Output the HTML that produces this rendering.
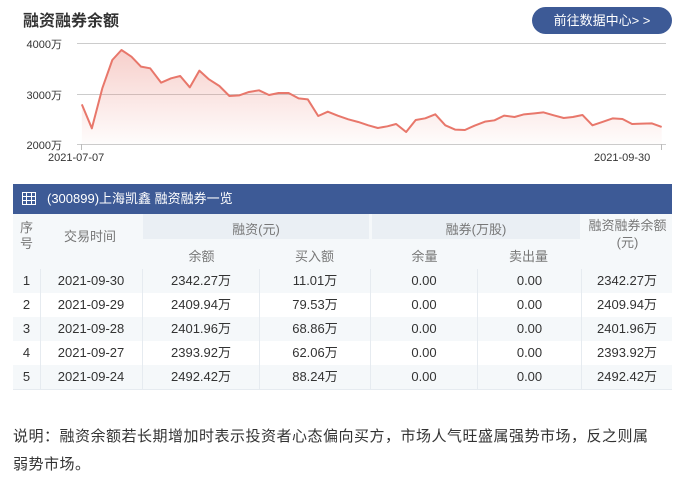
<!DOCTYPE html>
<html><head><meta charset="utf-8"><style>
*{margin:0;padding:0;box-sizing:border-box}
body{width:679px;height:477px;background:#fff;font-family:"Liberation Sans","Noto Sans CJK SC",sans-serif;color:#333;position:relative;overflow:hidden}
.abs{position:absolute}
.title{left:23px;top:7px;font-size:16px;font-weight:bold;color:#333}
.btn{left:532px;top:7px;width:140px;height:27px;border-radius:14px;background:#3d5a96;color:#fff;font-size:13px;line-height:27px;text-align:center}
.yl{font-size:11px;color:#333;width:50px;text-align:right;left:12px}
.bar{left:13px;top:184px;width:659px;height:30px;background:#3d5a96;color:#fff;font-size:13px;line-height:30px;padding-left:34px}
.c{position:absolute;text-align:center;font-size:13px}
.h{color:#777;font-size:13px}
.note{left:13px;top:423px;width:664px;font-size:15px;letter-spacing:0.5px;line-height:28px;color:#333}
</style></head><body>
<div class="abs title">融资融券余额</div>
<div class="abs btn">前往数据中心&gt; &gt;</div>
<div class="abs yl" style="top:36px">4000万</div>
<div class="abs yl" style="top:87px">3000万</div>
<div class="abs yl" style="top:137px">2000万</div>
<div class="abs" style="left:48px;top:152px;font-size:11px">2021-07-07</div>
<div class="abs" style="left:594px;top:152px;font-size:11px">2021-09-30</div>
<svg class="abs" style="left:0;top:0" width="679" height="170">
<defs><linearGradient id="g" x1="0" y1="0" x2="0" y2="1"><stop offset="0" stop-color="#e8776b" stop-opacity="0.35"/><stop offset="1" stop-color="#e8776b" stop-opacity="0.02"/></linearGradient></defs>
<line x1="77" y1="43.5" x2="666" y2="43.5" stroke="#ccc"/>
<line x1="77" y1="94.5" x2="666" y2="94.5" stroke="#ccc"/>
<line x1="77" y1="144.5" x2="666" y2="144.5" stroke="#ccc"/>
<line x1="81.5" y1="144" x2="81.5" y2="150" stroke="#bbb"/>
<line x1="661.5" y1="144" x2="661.5" y2="150" stroke="#bbb"/>
<g transform="scale(0.4353,0.3333)">
<path fill="url(#g)" d="M188,433 L188,313 L211,385 L235,265 L258,180 L279,150 L302,170 L324,200 L345,205 L370,248 L393,235 L414,228 L436,262 L458,212 L480,238 L504,258 L527,288 L550,286 L572,276 L595,271 L618,285 L640,279 L663,279 L686,295 L707,298 L731,348 L753,335 L776,347 L800,358 L823,366 L846,376 L868,384 L890,379 L910,372 L933,396 L955,360 L977,355 L1000,343 L1023,376 L1046,389 L1068,390 L1090,377 L1114,365 L1136,361 L1158,347 L1182,351 L1204,343 L1228,340 L1248,337 L1272,346 L1295,354 L1316,351 L1338,345 L1361,376 L1384,366 L1408,355 L1430,357 L1452,372 L1476,371 L1497,370 L1520,381 L1520,433 Z"/>
<path fill="none" stroke="#e8776b" stroke-width="2" vector-effect="non-scaling-stroke" stroke-linejoin="round" d="M188,313 L211,385 L235,265 L258,180 L279,150 L302,170 L324,200 L345,205 L370,248 L393,235 L414,228 L436,262 L458,212 L480,238 L504,258 L527,288 L550,286 L572,276 L595,271 L618,285 L640,279 L663,279 L686,295 L707,298 L731,348 L753,335 L776,347 L800,358 L823,366 L846,376 L868,384 L890,379 L910,372 L933,396 L955,360 L977,355 L1000,343 L1023,376 L1046,389 L1068,390 L1090,377 L1114,365 L1136,361 L1158,347 L1182,351 L1204,343 L1228,340 L1248,337 L1272,346 L1295,354 L1316,351 L1338,345 L1361,376 L1384,366 L1408,355 L1430,357 L1452,372 L1476,371 L1497,370 L1520,381"/>
</g>
</svg>
<div class="abs bar">(300899)上海凯鑫 融资融券一览</div>
<svg class="abs" style="left:22px;top:192px" width="14" height="13"><rect x="0.5" y="0.5" width="13" height="12" fill="none" stroke="#fff"/><path d="M0,4.5H14M0,8.5H14M4.5,0V13M9.5,0V13" stroke="#fff"/></svg>
<div class="abs" style="left:13px;top:214px;width:659px;height:55px;background:#f5f8fa"></div>
<div class="abs" style="left:143px;top:214px;width:226px;height:25px;background:#eaeff4"></div>
<div class="abs" style="left:372px;top:214px;width:208px;height:25px;background:#eaeff4"></div>
<div class="c h" style="left:13px;top:220px;width:27px;line-height:16px">序<br>号</div>
<div class="c h" style="left:40px;top:226px;width:100px">交易时间</div>
<div class="c h" style="left:143px;top:219px;width:226px">融资(元)</div>
<div class="c h" style="left:372px;top:219px;width:208px">融券(万股)</div>
<div class="c h" style="left:583px;top:217px;width:89px;line-height:17px">融资融券余额<br>(元)</div>
<div class="c h" style="left:143px;top:246px;width:117px">余额</div>
<div class="c h" style="left:260px;top:246px;width:109px">买入额</div>
<div class="c h" style="left:372px;top:246px;width:105px">余量</div>
<div class="c h" style="left:477px;top:246px;width:103px">卖出量</div>
<div class="abs" style="left:13px;top:269px;width:659px;height:24px;background:#f5f8fa"></div>
<div class="abs" style="left:13px;top:317px;width:659px;height:24px;background:#f5f8fa"></div>
<div class="abs" style="left:13px;top:365px;width:659px;height:24px;background:#f5f8fa"></div>
<div class="abs" style="left:13px;top:389px;width:659px;height:1px;background:#e6ebf0"></div>
<div class="abs" style="left:40px;top:269px;width:1px;height:120px;background:#e6ebf0"></div>
<div class="abs" style="left:142px;top:269px;width:1px;height:120px;background:#e6ebf0"></div>
<div class="abs" style="left:259px;top:269px;width:1px;height:120px;background:#e6ebf0"></div>
<div class="abs" style="left:370px;top:269px;width:1px;height:120px;background:#e6ebf0"></div>
<div class="abs" style="left:477px;top:269px;width:1px;height:120px;background:#e6ebf0"></div>
<div class="abs" style="left:581px;top:269px;width:1px;height:120px;background:#e6ebf0"></div>
<div class="c" style="left:13px;top:269px;width:27px;line-height:24px">1<br>2<br>3<br>4<br>5</div>
<div class="c" style="left:40px;top:269px;width:102px;line-height:24px">2021-09-30<br>2021-09-29<br>2021-09-28<br>2021-09-27<br>2021-09-24</div>
<div class="c" style="left:143px;top:269px;width:116px;line-height:24px">2342.27万<br>2409.94万<br>2401.96万<br>2393.92万<br>2492.42万</div>
<div class="c" style="left:260px;top:269px;width:110px;line-height:24px">11.01万<br>79.53万<br>68.86万<br>62.06万<br>88.24万</div>
<div class="c" style="left:371px;top:269px;width:106px;line-height:24px">0.00<br>0.00<br>0.00<br>0.00<br>0.00</div>
<div class="c" style="left:478px;top:269px;width:103px;line-height:24px">0.00<br>0.00<br>0.00<br>0.00<br>0.00</div>
<div class="c" style="left:582px;top:269px;width:90px;line-height:24px">2342.27万<br>2409.94万<br>2401.96万<br>2393.92万<br>2492.42万</div>
<div class="abs note">说明：融资余额若长期增加时表示投资者心态偏向买方，市场人气旺盛属强势市场，反之则属<br>弱势市场。</div>
</body></html>
